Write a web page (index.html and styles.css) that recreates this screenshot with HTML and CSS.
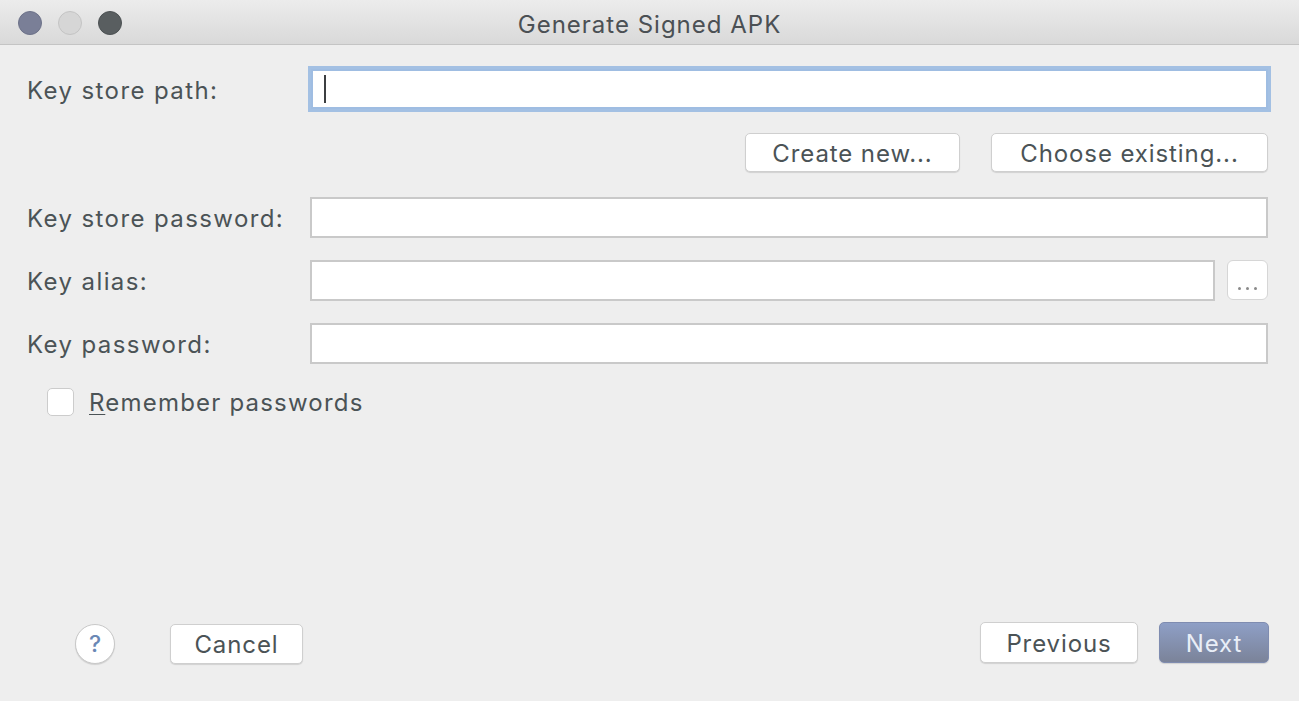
FILE: index.html
```html
<!DOCTYPE html>
<html>
<head>
<meta charset="utf-8">
<link rel="stylesheet" href="styles.css">
</head>
<body>
<div class="window">
  <div class="titlebar">
    <div class="lights">
      <span class="light light-close"></span>
      <span class="light light-min"></span>
      <span class="light light-max"></span>
    </div>
    <div class="title">Generate Signed APK</div>
  </div>
  <div class="content">
    <div class="row row-path">
      <label class="label">Key store path:</label>
      <div class="field field-focus"><span class="caret"></span></div>
    </div>
    <div class="row-buttons">
      <button class="btn btn-create">Create new...</button>
      <button class="btn btn-choose">Choose existing...</button>
    </div>
    <div class="row row-storepw">
      <label class="label">Key store password:</label>
      <div class="field"></div>
    </div>
    <div class="row row-alias">
      <label class="label">Key alias:</label>
      <div class="field-group">
        <div class="field"></div>
        <button class="dots-btn"><span class="dot"></span><span class="dot"></span><span class="dot"></span></button>
      </div>
    </div>
    <div class="row row-keypw">
      <label class="label">Key password:</label>
      <div class="field"></div>
    </div>
    <div class="check-row">
      <span class="checkbox"></span>
      <span class="check-label"><u>R</u>emember passwords</span>
    </div>
  </div>
  <div class="footer">
    <button class="help">?</button>
    <button class="btn btn-cancel">Cancel</button>
    <div class="spacer"></div>
    <button class="btn btn-prev">Previous</button>
    <button class="btn btn-next">Next</button>
  </div>
</div>
</body>
</html>
```
FILE: styles.css
```css
html, body {
  margin: 0;
  padding: 0;
  background: #eeeeee;
}
body {
  font-family: Inter, "Liberation Sans", sans-serif;
  color: #4b5356;
}
.window {
  width: 1299px;
  height: 701px;
  display: flex;
  flex-direction: column;
  background: #eeeeee;
}
.titlebar {
  height: 44px;
  flex: none;
  border-bottom: 1px solid #c4c4c4;
  background: linear-gradient(#ececec, #d9d9d9);
  display: flex;
  align-items: center;
  position: relative;
}
.lights {
  display: flex;
  gap: 16px;
  padding-left: 18px;
  padding-top: 2px;
}
.light {
  width: 24px;
  height: 24px;
  border-radius: 50%;
  box-sizing: border-box;
}
.light-close { background: #7a7f97; border: 1px solid #6d7289; }
.light-min { background: #d6d6d6; border: 1px solid #c4c4c4; }
.light-max { background: #595e60; border: 1px solid #4c5153; }
.title {
  position: absolute;
  left: 0;
  right: 0;
  top: 10px;
  text-align: center;
  font-size: 24px;
  color: #4b5054;
  letter-spacing: 1px;
}
.content {
  padding: 24px 31px 0 27px;
  flex: 1;
}
.row {
  display: grid;
  grid-template-columns: 283px 1fr;
  align-items: center;
}
.label {
  font-size: 24px;
  letter-spacing: 1.4px;
  color: #4b5356;
  padding-top: 2px;
}
.field {
  height: 41px;
  box-sizing: border-box;
  background: #ffffff;
  border: 2px solid #c9c9c9;
}
.field-focus {
  height: 40px;
  border: 2px solid #9fbde2;
  box-shadow: 0 0 0 3px #a3c0e3;
  display: flex;
  align-items: center;
  padding-left: 11px;
  margin-left: 1px;
}
.caret {
  width: 2px;
  height: 28px;
  background: #3c3f41;
}
.row-buttons {
  display: flex;
  justify-content: flex-end;
  gap: 31px;
  margin-top: 24px;
  padding-right: 0;
}
.btn {
  font-family: inherit;
  font-size: 24px;
  color: #4b5356;
  background: #ffffff;
  border: 1px solid #cfcfcf;
  border-radius: 5px;
  box-shadow: 0 1px 1px rgba(0,0,0,0.12);
  height: 40px;
  padding: 1px 0 0 0;
  letter-spacing: 0.9px;
}
.btn-create { width: 215px; height: 39px; }
.btn-choose { width: 277px; height: 39px; }
.row-storepw { margin-top: 25px; }
.row-alias { margin-top: 22px; }
.row-keypw { margin-top: 22px; }
.field-group {
  display: flex;
  gap: 12px;
}
.field-group .field { flex: 1; }
.dots-btn {
  width: 41px;
  height: 40px;
  background: #ffffff;
  border: 1px solid #d6d6d6;
  border-radius: 6px;
  display: flex;
  align-items: flex-end;
  justify-content: center;
  gap: 5px;
  padding: 0 0 9px 0;
}
.dot {
  width: 3px;
  height: 3px;
  border-radius: 50%;
  background: #8a8a8a;
}
.check-row {
  display: flex;
  align-items: center;
  margin-top: 22px;
  padding-left: 20px;
}
.checkbox {
  width: 27px;
  height: 28px;
  box-sizing: border-box;
  background: #ffffff;
  border: 1px solid #cccccc;
  border-radius: 5px;
  margin-right: 15px;
}
.check-label {
  font-size: 24px;
  letter-spacing: 1.2px;
  color: #4b5356;
  padding-top: 2px;
}
.check-label u {
  text-decoration-thickness: 1px;
  text-underline-offset: 3px;
}
.footer {
  display: flex;
  align-items: center;
  padding: 0 30px 35px 75px;
  flex: none;
}
.help {
  width: 40px;
  height: 40px;
  border-radius: 50%;
  background: #ffffff;
  border: 1px solid #c8c8c8;
  box-shadow: 0 1px 1px rgba(0,0,0,0.12);
  font-family: inherit;
  font-size: 23px;
  font-weight: 500;
  color: #6a87b5;
  padding: 0;
  margin-right: 55px;
}
.btn-cancel { width: 133px; }
.spacer { flex: 1; }
.btn-prev { width: 158px; height: 41px; margin-right: 21px; margin-bottom: 3px; }
.btn-next {
  width: 110px;
  height: 41px;
  margin-bottom: 3px;
  color: #e9eef7;
  background: linear-gradient(#8e9fc6, #7b8399);
  border: 1px solid #7f8cb0;
}
```
